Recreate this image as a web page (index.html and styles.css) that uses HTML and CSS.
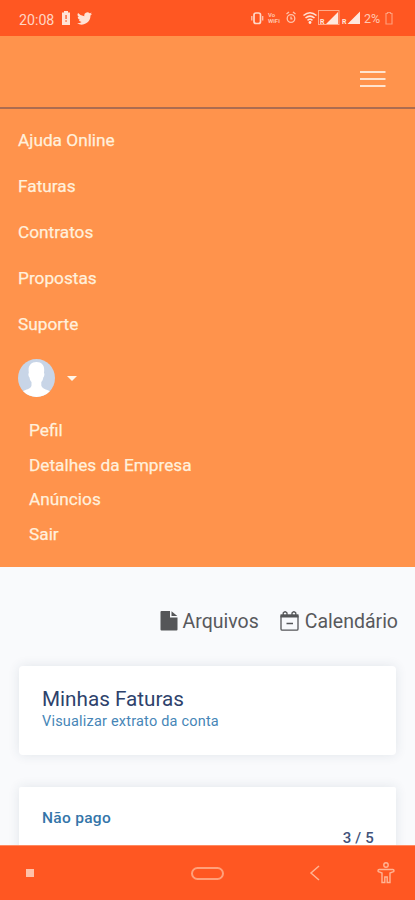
FILE: index.html
```html
<!DOCTYPE html>
<html lang="pt">
<head>
<meta charset="utf-8">
<title>Minhas Faturas</title>
<link rel="stylesheet" href="styles.css">
</head>
<body>
<div class="screen">
  <div class="status">
    <span class="clock">20:08</span>
    <svg class="battery-alert" width="10" height="14" viewBox="0 0 10 14"><path fill="#ffe3d6" fill-rule="evenodd" d="M3 0h4v1.500h2V14H1V1.500h2zM4.400 4v4h1.300V4zm0 5.200v1.500h1.300V9.200z"/></svg>
    <svg class="bird" width="15" height="13" viewBox="0 0 24 20"><path fill="#ffe3d6" d="M24 2.400a10 10 0 0 1-2.800.8A5 5 0 0 0 23.300.500a10 10 0 0 1-3.100 1.200 4.900 4.900 0 0 0-8.400 4.500A14 14 0 0 1 1.700 1a4.900 4.900 0 0 0 1.500 6.600A5 5 0 0 1 1 7a4.900 4.900 0 0 0 3.900 4.900 5 5 0 0 1-2.200.1 4.900 4.900 0 0 0 4.600 3.400A9.900 9.900 0 0 1 0 17.500 14 14 0 0 0 21.500 5c1-.7 1.800-1.600 2.500-2.600z"/></svg>
    <svg class="indicators" width="110" height="20" viewBox="250 9 110 20">
      <g fill="none" stroke="#ffc3aa" stroke-width="1.300">
        <rect x="254" y="14" width="6.500" height="10.500" rx="2" stroke="#ffd8c8" stroke-width="1.700"/>
        <path d="M251.800 17v4.500M262.700 17v4.500"/>
        <circle cx="291" cy="19.500" r="3.800"/><path d="M291 17.500v2.300h1.500M286.500 15l2.500-2M295.500 15l-2.500-2"/>
        <path stroke="#ffe0d2" stroke-width="1.600" d="M303.500 16.500q6.500-5.500 13 0M305.500 19q4.500-3.800 9 0M307.500 21.300q2.500-2 5 0"/>
        <rect x="318.500" y="11.500" width="20.500" height="14" stroke="#ffab8b" stroke-width="1"/>
      </g>
      <g fill="#ffe8de"><circle cx="310" cy="23.500" r="1.400"/><path d="M326 25h12V13zM347.500 25H360V12.500z"/></g>
      <g class="tiny"><text x="268" y="18">Vo</text><text x="268" y="23.500">WiFi</text></g>
      <g class="tiny sim"><text x="320" y="24.500">R</text><text x="342" y="24.500">R</text></g>
    </svg>
    <span class="percent">2%</span>
    <svg width="10" height="14" viewBox="0 0 10 14"><path fill="none" stroke="#ff9c78" stroke-width="1.200" d="M3.500 2.500V1.500h3v1H8V13H2V2.500z"/></svg>
  </div>
  <header class="topbar">
    <svg width="26" height="18" viewBox="0 0 26 18"><path stroke="#ffe4cf" stroke-width="2" d="M0 2h25.500M0 9h25.500M0 16h25.500"/></svg>
  </header>
  <nav class="menu">
    <a>Ajuda Online</a>
    <a>Faturas</a>
    <a>Contratos</a>
    <a>Propostas</a>
    <a>Suporte</a>
    <div class="user">
      <svg width="37" height="38" viewBox="0 0 37 38"><defs><clipPath id="round"><ellipse cx="18.500" cy="19" rx="18.500" ry="19"/></clipPath></defs><g clip-path="url(#round)"><path fill="#c8d5e7" d="M0 0h37v38H0z"/><path fill="#fff" d="M18.500 3c5 0 8 3 7.700 8.500l-.2 2.500c.8.600.4 3.500-.7 4.500-.3 2-1 3.500-2 4.500v3.500c.4 2.500 3 3.500 6 4.500 2.500.8 4 3 4.500 7H3c.5-4 2-6.200 4.500-7 3-1 5.700-2 6-4.500V23c-1-1-1.700-2.500-2-4.500-1.100-1-1.500-3.900-.7-4.500l-.2-2.500C10.400 6 13.500 3 18.500 3z"/></g></svg>
      <span class="caret"></span>
    </div>
    <div class="submenu">
      <a>Pefil</a>
      <a>Detalhes da Empresa</a>
      <a>Anúncios</a>
      <a>Sair</a>
    </div>
  </nav>
  <main class="content">
    <div class="actions">
      <a><svg width="18" height="20" viewBox="0 0 18 20"><path fill="#555658" d="M1.500 0H10v6.500h7.500V18.500q0 1-1 1h-15q-1 0-1-1V1q0-1 1-1zM11.500.300 17.300 5h-5.800z"/></svg><span>Arquivos</span></a>
      <a class="calendar"><svg width="19" height="20" viewBox="0 0 19 20"><path fill="none" stroke="#555658" stroke-width="1.300" d="M1 4.500V18q0 1.200 1.200 1.200h14.600Q18 19.200 18 18V4.500M6.500 12.500h6.500M3.200 4V2q1.900-2.500 3.800 0v2M12 4V2q1.900-2.500 3.800 0v2"/><path fill="#555658" d="M.5 3.300h18V6.500H.5z"/></svg><span>Calendário</span></a>
    </div>
    <section class="card summary">
      <h1>Minhas Faturas</h1>
      <a>Visualizar extrato da conta</a>
    </section>
    <section class="card unpaid">
      <strong>Não pago</strong>
      <span class="count">3 / 5</span>
    </section>
  </main>
  <footer class="navbar">
    <span class="dot"></span>
    <span class="home"></span>
    <svg class="back" width="12" height="16" viewBox="0 0 12 16"><path fill="none" stroke="#ffb494" stroke-width="1.500" d="M10 1 2 8l8 7"/></svg>
    <svg class="person" width="18" height="24" viewBox="0 0 18 24"><g fill="none" stroke="#ffb494" stroke-width="1.400"><circle cx="9" cy="4" r="2.200"/><path d="M2.200 8.500h13.600q1.200 0 1.200 1.200t-1.200 1.200L13 12v9.500h-2.800V16H7.800v5.500H5V12l-2.800-1.100Q1 10.900 1 9.700t1.200-1.200z"/></g></svg>
  </footer>
</div>
</body>
</html>
```
FILE: styles.css
```css
* { box-sizing: border-box; }
body { margin: 0; font-family: Roboto, "Liberation Sans", sans-serif; }
.screen { width: 415px; height: 900px; display: flex; flex-direction: column; overflow: hidden; background: #f9fafc; }
.status { height: 36px; flex: none; display: flex; align-items: center; padding-left: 19px; background: #ff5722; color: #ffd5c4; }
.clock { width: 42px; font-size: 14.2px; line-height: 20px; padding-top: 3px; }
.battery-alert { margin-right: 6px; }
.bird { margin-right: 158px; }
.indicators { margin-right: 4px; }
.tiny { font-size: 6px; font-weight: 700; fill: #ffc3aa; }
.sim { font-size: 7px; fill: #ffe8de; }
.percent { width: 20px; font-size: 12.5px; padding-top: 1px; color: #ffc9b3; }
.topbar { height: 73px; flex: none; display: flex; justify-content: flex-end; align-items: flex-start; padding: 34px 29px 0 0; background: #ff934c; border-bottom: 2px solid #ad6c50; }
.menu { height: 458px; flex: none; display: flex; flex-direction: column; padding: 8px 18px 0; background: #ff934c; color: #fff0dc; font-size: 17.25px; -webkit-text-stroke: .25px #fff0dc; }
.menu > a { height: 46px; line-height: 46px; }
.user { height: 66px; display: flex; align-items: center; gap: 12px; padding-bottom: 4px; }
.caret { border: 5px solid transparent; border-top-color: #fff5e8; border-bottom: 0; }
.submenu { display: flex; flex-direction: column; padding-left: 11px; }
.submenu a { height: 34.7px; line-height: 34px; }
.content { flex: 1; min-height: 0; overflow: hidden; padding: 41px 19px 0; }
.actions { height: 26px; display: flex; justify-content: flex-end; gap: 21px; margin-right: -2px; color: #58595c; font-size: 19.5px; }
.actions a { display: flex; align-items: center; gap: 5px; }
.actions .calendar { gap: 6px; }
.card { background: #fff; border-radius: 4px; box-shadow: 0 0 12px rgba(40, 60, 90, .11); padding: 0 23px; }
.summary { margin-top: 32px; height: 89px; padding-top: 20px; display: flex; flex-direction: column; }
.summary h1 { margin: 0; font-size: 20.7px; line-height: 27px; font-weight: 400; color: #2e426c; }
.summary a { font-size: 14.5px; letter-spacing: .2px; line-height: 18px; color: #4686b7; }
.unpaid { margin-top: 32px; height: 100px; display: flex; flex-direction: column; padding-top: 21px; border-radius: 2px; }
.unpaid strong { font-size: 15.5px; letter-spacing: .3px; font-weight: 500; line-height: 21px; color: #3475a9; }
.count { align-self: flex-end; font-size: 15px; line-height: 18px; font-weight: 500; letter-spacing: .2px; margin-right: -1px; color: #42527a; }
.navbar { height: 55px; flex: none; display: flex; align-items: center; padding-left: 26px; background: #ff5722; border-top: 1px solid #ff8a61; }
.dot { width: 8px; height: 8px; background: #ffc1a9; }
.home { width: 33px; height: 13px; margin-left: 157px; border: 2px solid #ffa07a; border-radius: 7px; }
.back { margin-left: 85px; }
.person { margin-left: 56px; }
```
